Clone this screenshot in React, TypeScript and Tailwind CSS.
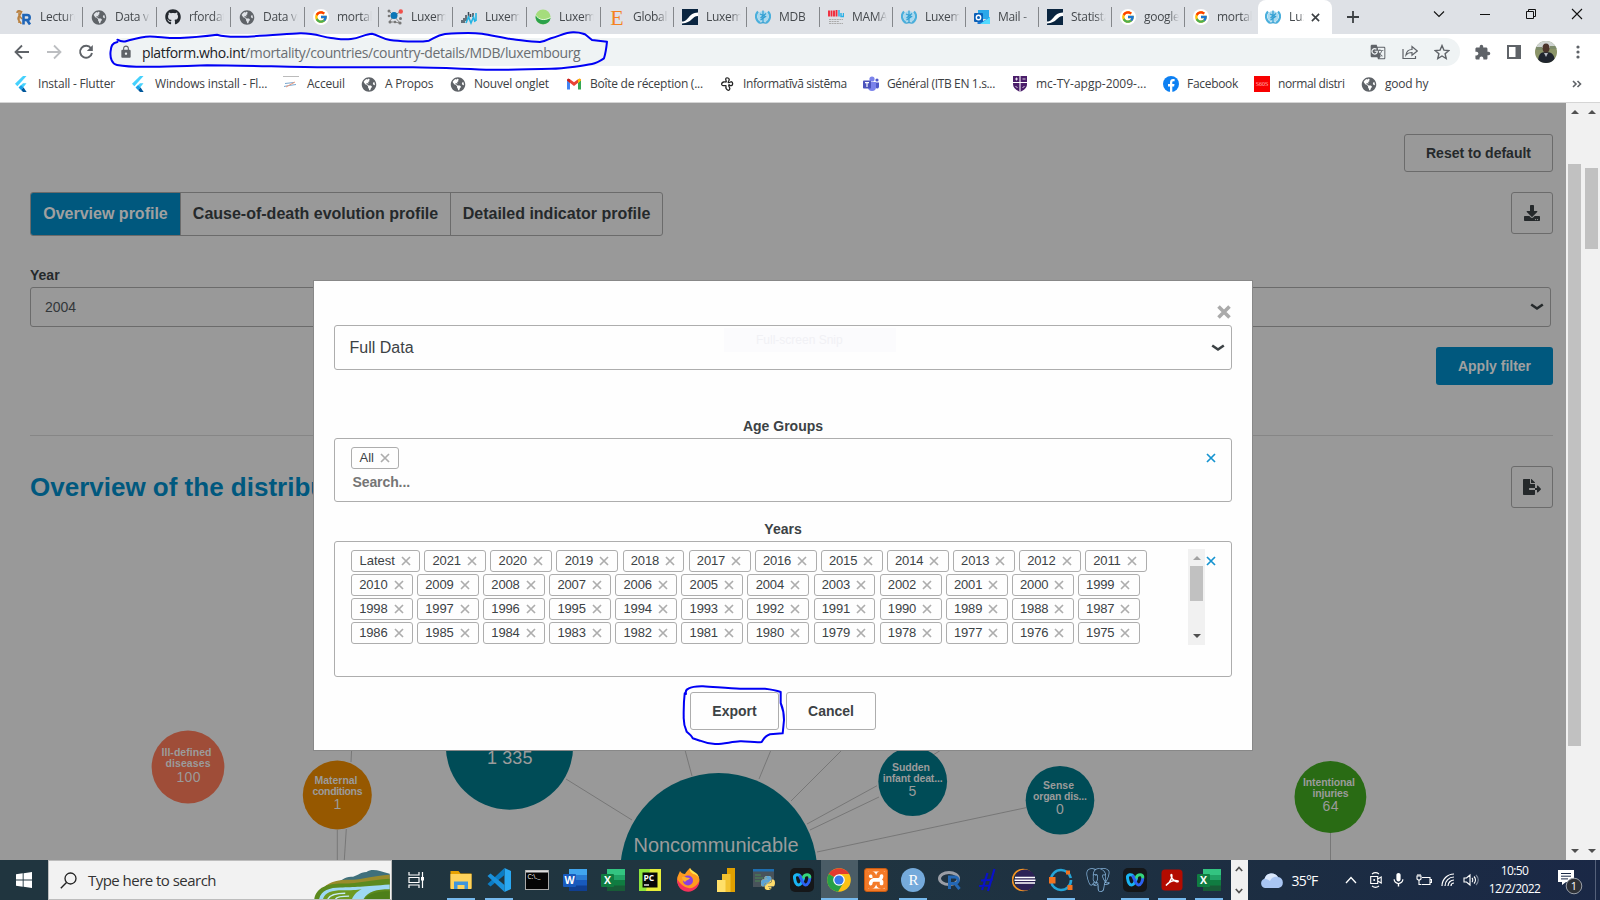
import React from "react";
import { FaDownload, FaFileExport, FaGithub, FaGlobeAmericas, FaPython } from "react-icons/fa";
import { FcGoogle } from "react-icons/fc";
import { SiPostgresql, SiXampp } from "react-icons/si";
import { MdLock, MdGTranslate, MdMic, MdExtension } from "react-icons/md";

type P = { children?: React.ReactNode };

const Svg16 = ({ children }: P) => (
  <svg viewBox="0 0 16 16" className="h-4 w-4 shrink-0">{children}</svg>
);
const Svg24 = ({ children }: P) => (
  <svg viewBox="0 0 24 24" className="h-6 w-6 shrink-0">{children}</svg>
);

const Globe = () => <FaGlobeAmericas className="h-[15px] w-4 shrink-0 text-[#5f6368]" />;
const Google = () => (
  <span className="flex h-4 w-4 shrink-0 items-center justify-center rounded-full bg-white">
    <FcGoogle className="h-[14px] w-[14px]" />
  </span>
);
const RProject = () => (
  <Svg16>
    <path d="M1 4c0-3 4-3 4-.5S1.500 7 2 10s3 2 3 5M3 1v13M6 2L3.500 7 6 10" stroke="#b9803f" strokeWidth="1.500" fill="none" />
    <path d="M7.500 15.500V6h3.700a2.300 2.300 0 0 1 0 5H8M11 11l3 4.500" stroke="#1f65b7" strokeWidth="2.600" fill="none" />
  </Svg16>
);
const Nodes = () => (
  <Svg16>
    <path d="M2 2l5 5 7-5M7 7l-5 6M7 7l6 7M2 13h5l6 1" stroke="#888" fill="none" />
    <circle cx="7" cy="6.500" r="3.500" fill="#0b76b8" />
    <circle cx="13.800" cy="2.500" r="2.200" fill="#f0504a" />
    <g fill="#777"><circle cx="2" cy="2" r="1.500" /><circle cx="2" cy="7" r="1.300" /><circle cx="3" cy="13" r="1.500" /><circle cx="8" cy="13" r="1.300" /><circle cx="13" cy="14" r="1.600" /><circle cx="13.500" cy="9.500" r="1.500" /></g>
  </Svg16>
);
const Bars = () => (
  <Svg16>
    <path d="M1 14v-3M3 14V9M5 12V6M7.500 9V3M9.500 8V5M12 8V4" stroke="#3b4a55" strokeWidth="1.500" />
    <path d="M5 14l2.500-6L10 14l2.500-6 1.500 5M15 12V4" stroke="#22b4e4" strokeWidth="1.600" fill="none" />
  </Svg16>
);
const Leaf = () => (
  <Svg16>
    <circle cx="8" cy="8" r="7.600" fill="#a5dd7c" />
    <path d="M.8 6C4 11 9 12 15.600 9A7.600 7.600 0 0 1 .6 9z" fill="#2ba14b" />
    <path d="M.6 6C4 11 9 12 15.500 8.500" stroke="#e4f7d6" fill="none" />
  </Svg16>
);
const Statista = () => (
  <Svg16>
    <rect width="16" height="16" fill="#0a2540" />
    <path d="M0 12.500C7 12.500 6 4 16 3.500V7C10 7 10 14 0 14.500z" fill="#fff" />
  </Svg16>
);
const Who = () => (
  <Svg16>
    <circle cx="8" cy="7.500" r="5.500" fill="#a9d9ef" />
    <path d="M3 2.500C-.4 6 .6 11.500 5 14M13 2.500c3.400 3.500 2.400 9-2 11.500" fill="none" stroke="#4aafdc" strokeWidth="2.200" />
    <path d="M5 14.200c2-.8 4-.8 6 0M8 1.500v11.500M5 5l5.500 2.500-5 3.500M11 4.500L5.500 9" stroke="#339fd2" strokeWidth="1.200" fill="none" />
  </Svg16>
);
const MiLu = () => (
  <Svg16>
    <path d="M1 1.500v6M3.500 1.500v6M6 1.500v6M8.500 1v6.500" stroke="#f02a3a" strokeWidth="1.900" />
    <path d="M11 1v6.500M13 4v3.500h2.500V4" stroke="#2cb1e6" strokeWidth="1.500" fill="none" />
    <path d="M1 10.500h14M1 12.500h10M1 14.500h14" stroke="#aaa" strokeWidth="1.200" strokeDasharray="2 .6" />
  </Svg16>
);
const Outlook = () => (
  <Svg16>
    <rect x="4" y="1" width="11" height="9" fill="#2aa8ea" />
    <path d="M3.500 8l6 4 6.500-4v7H3.500z" fill="#1976d2" /><path d="M16 8v7H6z" fill="#50d9ff" />
    <rect y="4" width="9" height="9" rx="1" fill="#0a60b8" />
    <circle cx="4.500" cy="8.500" r="2.200" fill="none" stroke="#fff" strokeWidth="1.400" />
  </Svg16>
);
const Flutter = () => (
  <Svg16>
    <path d="M9 0L1 7.800l2.400 2.400L12.500 0z" fill="#45d1fd" />
    <path d="M9 7.200l-4.400 4.300 2.500 2.500 5.400-6.800z" fill="#45d1fd" />
    <path d="M4.600 11.500L7 9.200l2.600 2.400-2.500 2.400z" fill="#1aa0e8" />
    <path d="M7.100 14l2.500-2.400 3 4.400H9z" fill="#01579b" />
  </Svg16>
);
const Accueil = () => (
  <Svg16>
    <path d="M0 .5h16" stroke="#bbb" /><path d="M1 10.500l5-1 7-1M2 7.500l9-1" stroke="#79a7cf" fill="none" /><path d="M3 11l9-5" stroke="#ef9a7a" />
  </Svg16>
);
const Gmail = () => (
  <Svg16>
    <path d="M1 4v9.500h3V7z" fill="#4285f4" /><path d="M15 4v9.500h-3V7z" fill="#34a853" />
    <path d="M1 4.500c0-2 2-2 3-1.200l4 3 4-3c1-.8 3-.8 3 1.200L8 10z" fill="#ea4335" />
    <path d="M12 3.300c1-.8 3-.8 3 1.200L12 7z" fill="#fbbc04" /><path d="M1 4.500C1 2.600 3 2.500 4 3.300V7z" fill="#c5221f" />
  </Svg16>
);
const Info = () => (
  <Svg16>
    <path d="M7 4.500C6 2 7.500 1.500 9 2s1.500 2 .5 3.500S10 7 11.500 6s2.500 1 2 2.500-2 1.500-3 .5-1 1 0 2.500-.5 3.500-2 2.500S6.500 12 7 10.500 5 10 3.500 9.500 2.500 6.500 4.500 6 8 7 7 4.500z" fill="none" stroke="#222" strokeWidth="1.300" />
  </Svg16>
);
const Teams = () => (
  <Svg16>
    <circle cx="9" cy="3" r="2.600" fill="#7b83eb" /><circle cx="14" cy="4" r="1.600" fill="#5059c9" />
    <path d="M5 6h8v5a4 4 0 0 1-8 0z" fill="#7b83eb" /><path d="M13 6.500h3V11a2 2 0 0 1-3 1z" fill="#5059c9" />
    <rect y="4.500" width="8" height="8" rx=".8" fill="#4b53bc" /><path d="M2 6.600h4M4 6.600v4.400" stroke="#fff" strokeWidth="1.200" />
  </Svg16>
);
const Shield = () => (
  <Svg16>
    <path d="M1 0h14v8c0 4-3 6-7 8-4-2-7-4-7-8z" fill="#4a1d6a" />
    <path d="M8 0v16M1 6.500h14" stroke="#fff" strokeWidth="1.100" /><path d="M3 3h3M4.500 1.500v3M10.500 3h3M3.500 10l2 2M12.500 10l-2 2" stroke="#fff" strokeWidth=".8" />
  </Svg16>
);
const Facebook = () => (
  <Svg16>
    <circle cx="8" cy="8" r="8" fill="#0d80f2" />
    <path d="M7 16v-5.500H5V8h2V6.300C7 4.200 8.200 3 10 3l1.600.1v2.100h-1c-1 0-1.300.6-1.300 1.200V8h2.200l-.4 2.500H9.300V16z" fill="#fff" />
  </Svg16>
);
const RedSquare = () => (
  <span className="flex h-4 w-4 shrink-0 items-center justify-center bg-[#f80000] font-['Liberation_Serif',serif] text-[6px] text-[#ffb0b0]">S60S</span>
);

const tabs: { w: string; t: string; I: () => React.JSX.Element }[] = [
  { w: "w-[75px]", t: "Lecture", I: RProject },
  { w: "w-[74px]", t: "Data vi", I: Globe },
  { w: "w-[74px]", t: "rfordata", I: () => <FaGithub className="h-4 w-4 shrink-0 text-[#24292f]" /> },
  { w: "w-[74px]", t: "Data vi", I: Globe },
  { w: "w-[74px]", t: "mortali", I: Google },
  { w: "w-[74px]", t: "Luxem", I: Nodes },
  { w: "w-[74px]", t: "Luxem", I: Bars },
  { w: "w-[74px]", t: "Luxem", I: Leaf },
  { w: "w-[73px]", t: "Global", I: () => <span className="flex h-4 w-4 shrink-0 items-center justify-center font-['Liberation_Serif',serif] text-[22px] text-[#f5821f]">E</span> },
  { w: "w-[73px]", t: "Luxem", I: Statista },
  { w: "w-[73px]", t: "MDB", I: Who },
  { w: "w-[73px]", t: "MAMA", I: MiLu },
  { w: "w-[73px]", t: "Luxem", I: Who },
  { w: "w-[73px]", t: "Mail -", I: Outlook },
  { w: "w-[73px]", t: "Statista", I: Statista },
  { w: "w-[73px]", t: "google", I: Google },
  { w: "w-[73px]", t: "mortali", I: Google },
];

const bookmarks: { w: string; t: string; s: string; I: () => React.JSX.Element }[] = [
  { w: "w-[117px]", t: "Install - Flutter", s: "tracking-[-0.2px]", I: Flutter },
  { w: "w-[152px]", t: "Windows install - Fl...", s: "tracking-[-0.17px]", I: Flutter },
  { w: "w-[78px]", t: "Acceuil", s: "tracking-[-0.22px]", I: Accueil },
  { w: "w-[89px]", t: "A Propos", s: "tracking-[-0.27px]", I: Globe },
  { w: "w-[116px]", t: "Nouvel onglet", s: "tracking-[-0.22px]", I: Globe },
  { w: "w-[153px]", t: "Boîte de réception (...", s: "tracking-[-0.26px]", I: Gmail },
  { w: "w-[144px]", t: "Informatīvā sistēma", s: "tracking-[-0.38px]", I: Info },
  { w: "w-[149px]", t: "Général (ITB EN 1.s...", s: "tracking-[-0.35px]", I: Teams },
  { w: "w-[151px]", t: "mc-TY-apgp-2009-...", s: "tracking-[0px]", I: Shield },
  { w: "w-[91px]", t: "Facebook", s: "tracking-[-0.3px]", I: Facebook },
  { w: "w-[107px]", t: "normal distri", s: "tracking-[-0.4px]", I: RedSquare },
  { w: "w-[80px]", t: "good hy", s: "tracking-[-0.22px]", I: Globe },
];

function TabStrip() {
  return (
    <div className="flex h-[34px] bg-[#dee1e6] pl-[8px] text-[12px] text-[#45494d]">
      {tabs.map((t, i) => (
        <div key={i} className={`${t.w} flex h-full shrink-0 items-center`}>
          <div className="flex h-full min-w-0 flex-1 items-center gap-2 pl-2">
            <t.I />
            <span className="w-[35px] overflow-hidden whitespace-nowrap tracking-[-0.3px] [mask-image:linear-gradient(to_right,black_70%,transparent)]">{t.t}</span>
          </div>
          <div className={i === 16 ? "w-px" : "h-5 w-px bg-[#84878b]"} />
        </div>
      ))}
      <div className="flex h-full w-[74px] shrink-0 items-center rounded-t-lg bg-white pl-[7px]">
        <Who />
        <span className="ml-2 w-[15px] overflow-hidden whitespace-nowrap [mask-image:linear-gradient(to_right,black_70%,transparent)]">Lux</span>
        <svg viewBox="0 0 10 10" className="ml-[7px] h-[9px] w-[9px]"><path d="M1 1l8 8M9 1L1 9" stroke="#3c4043" strokeWidth="1.800" /></svg>
      </div>
      <svg viewBox="0 0 12 12" className="mt-[11px] ml-[15px] h-3 w-3"><path d="M6 0v12M0 6h12" stroke="#3c4043" strokeWidth="1.800" /></svg>
      <div className="mt-[8px] ml-[74px] flex h-3 gap-[34px]">
        <svg viewBox="0 0 12 12" className="h-3 w-3"><path d="M1 3.500l5 5 5-5" stroke="#111" strokeWidth="1.100" fill="none" /></svg>
        <svg viewBox="0 0 12 12" className="h-3 w-3"><path d="M1 6.500h10" stroke="#111" /></svg>
        <svg viewBox="0 0 12 12" className="h-3 w-3"><path d="M1.500 3.500h7v7h-7zM3.500 3.500v-2h7v7h-2" stroke="#111" fill="none" /></svg>
        <svg viewBox="0 0 12 12" className="h-3 w-3"><path d="M1 1l10 10M11 1L1 11" stroke="#111" strokeWidth="1.100" /></svg>
      </div>
    </div>
  );
}

function Toolbar() {
  return (
    <div className="flex h-[36px] items-center pl-[14px]">
      <Svg16><path d="M15 8H2M8 1.500L1.500 8 8 14.500" stroke="#5f6368" strokeWidth="1.800" fill="none" /></Svg16>
      <span className="w-4" />
      <Svg16><path d="M1 8h13M8 1.500L14.500 8 8 14.500" stroke="#bcbec1" strokeWidth="1.800" fill="none" /></Svg16>
      <span className="w-4" />
      <Svg16><path d="M13 4.200A6 6 0 1 0 14 9" stroke="#5f6368" strokeWidth="1.900" fill="none" /><path d="M14.800 1v6h-6z" fill="#5f6368" /></Svg16>
      <div className="ml-[16px] flex h-7 w-[1350px] items-center rounded-full bg-[#eff3f4]">
        <MdLock className="ml-[9px] h-[14px] w-[14px] text-[#5f6368]" />
        <span className="ml-[9px] text-[14px] tracking-[-0.37px] whitespace-nowrap text-[#6a6e72]"><span className="text-[#202124]">platform.who.int</span>/mortality/countries/country-details/MDB/luxembourg</span>
        <div className="mr-[10px] ml-auto flex gap-4">
          <MdGTranslate className="h-4 w-4 text-[#5f6368]" />
          <Svg16><path d="M1 5v9.500h12.500V12" stroke="#5f6368" strokeWidth="1.200" fill="none" /><path d="M4 11c.5-4 3-5.500 6-5.500V2.500L15.300 7 10 11.200V8.500C7 8.500 5.500 9 4 11z" stroke="#5f6368" strokeWidth="1.200" fill="none" /></Svg16>
          <Svg16><path d="M8 1.600l1.900 4.500 4.900.4-3.700 3.200 1.100 4.800L8 12l-4.200 2.500 1.100-4.800L1.200 6.500l4.900-.4z" stroke="#5f6368" strokeWidth="1.400" fill="none" /></Svg16>
        </div>
      </div>
      <MdExtension className="ml-[14px] h-[17px] w-[17px] text-[#5f6368]" />
      <svg viewBox="0 0 14 14" className="ml-[16px] h-[14px] w-[14px]"><path d="M1 1h12v12H1z" stroke="#5f6368" strokeWidth="2" fill="none" /><path d="M8.500 0H14v14H8.500z" fill="#5f6368" /></svg>
      <svg viewBox="0 0 22 22" className="ml-[14px] h-[22px] w-[22px] overflow-hidden rounded-full">
        <path d="M0 0h22v22H0z" fill="#8b9468" /><path d="M0 0h22v7H0z" fill="#cfd4d2" /><path d="M1 6h6v3H1zM15 5h7v3h-7z" fill="#7d8b6a" />
        <path d="M3 22c0-8 2-11 8-11s9 3 9 11z" fill="#20252e" /><ellipse cx="11" cy="7" rx="3.500" ry="4.500" fill="#4b342b" /><path d="M9 12l2 4 2-4z" fill="#b8bcc4" />
      </svg>
      <svg viewBox="0 0 4 14" className="ml-[19px] h-[14px] w-1"><g fill="#5f6368"><circle cx="2" cy="2" r="1.600" /><circle cx="2" cy="7" r="1.600" /><circle cx="2" cy="12" r="1.600" /></g></svg>
    </div>
  );
}

function Bookmarks() {
  return (
    <div className="flex h-[28px] items-center pl-[14px] text-[12px] text-[#3c4043]">
      {bookmarks.map((b, i) => (
        <div key={i} className={`${b.w} flex shrink-0 items-center gap-2`}>
          <b.I />
          <span className={`${b.s} whitespace-nowrap`}>{b.t}</span>
        </div>
      ))}
      <svg viewBox="0 0 10 8" className="ml-[131px] h-2 w-[10px]"><path d="M1 1l3 3-3 3M5.500 1l3 3-3 3" stroke="#5f6368" strokeWidth="1.600" fill="none" /></svg>
    </div>
  );
}

const Chevron = () => (
  <svg viewBox="0 0 14 8" className="h-2 w-[14px]"><path d="M1.200 1.500L7 5.500l5.800-4" stroke="currentColor" strokeWidth="2.600" fill="none" /></svg>
);
const Cross = () => (
  <svg viewBox="0 0 10 10" className="h-[10px] w-[10px] shrink-0"><path d="M1 1l8 8M9 1L1 9" stroke="currentColor" strokeWidth="1.700" /></svg>
);

type T = [string, number, number, number, number, boolean];
const labels: T[] = [
  ["Ill-defined", 186.5, 756, 50, 10.5, true],
  ["diseases", 188, 767, 45, 10.5, true],
  ["100", 188.500, 782, 24, 14, false],
  ["Maternal", 336, 784, 43, 10.5, true],
  ["conditions", 337.500, 795, 50, 10.5, true],
  ["1", 337.500, 809, 7, 14, false],
  ["1 335", 509.700, 764, 45.500, 18, false],
  ["Noncommunicable", 716, 852, 165, 20, false],
  ["diseases", 716, 875, 76, 20, false],
  ["Sudden", 911, 771, 38, 10.5, true],
  ["infant deat...", 912.700, 782, 60, 10.5, true],
  ["5", 912.500, 796, 8, 14, false],
  ["Sense", 1058.500, 789, 31, 10.5, true],
  ["organ dis...", 1060, 800, 54, 10.5, true],
  ["0", 1060, 814, 8, 14, false],
  ["Intentional", 1329, 786, 52, 10.5, true],
  ["injuries", 1330.500, 797, 36, 10.5, true],
  ["64", 1330.500, 811, 16, 14, false],
];

function Bubbles() {
  return (
    <svg viewBox="0 720 1566 140" className="h-[140px] w-[1566px] overflow-hidden">
      <path d="M566 779l66 41M685 750l7 26M771 750l-12 29M842 750l-51 51M877 785.700L807 824M879 797l-69 33M941 750l-8 5M1026 807.700L817 852M351.600 750l-.6 12M337.300 830v30M346.300 829l-2 31M1330.500 833v27" stroke="#777" strokeWidth="1" fill="none" />
      <circle cx="188" cy="767" r="36.400" fill="#9f4d38" />
      <circle cx="337.300" cy="795" r="34.500" fill="#965800" />
      <g fill="#004c57">
        <circle cx="509.500" cy="746" r="63.700" /><circle cx="718.700" cy="871.400" r="98.400" />
        <circle cx="912.700" cy="781.600" r="34.400" /><circle cx="1060" cy="800.300" r="34.300" />
      </g>
      <circle cx="1330.400" cy="797" r="35.900" fill="#296b14" />
      {labels.map(([s, x, y, w, f, b], i) => (
        <text key={i} x={x} y={y} textAnchor="middle" textLength={w} fontSize={f} fontWeight={b ? 700 : 400} fill="#9b9b9b">{s}</text>
      ))}
    </svg>
  );
}

function Page() {
  return (
    <div className="flex h-[757px] w-[1566px] flex-col bg-[#999] font-['Liberation_Sans',Arial,sans-serif] text-[#25292b]">
      <div className="flex h-[89px] justify-end pt-[31px] pr-[13px]">
        <div className="flex h-[38px] w-[149px] items-center justify-center rounded-[3px] border border-[#6b6b6b] text-[14px] font-bold">Reset to default</div>
      </div>
      <div className="flex h-[72px] items-start justify-between pr-[13px] pl-[30px]">
        <div className="flex h-[44px] overflow-hidden rounded-[3px] border border-[#6b6b6b] text-[16px] font-bold whitespace-nowrap">
          <div className="flex w-[150px] items-center justify-center border-r border-[#6b6b6b] bg-[#00587e] text-[#a0a0a0]">Overview profile</div>
          <div className="flex w-[270px] items-center justify-center border-r border-[#6b6b6b]">Cause-of-death evolution profile</div>
          <div className="flex w-[211px] items-center justify-center">Detailed indicator profile</div>
        </div>
        <div className="flex h-[42px] w-[42px] items-center justify-center rounded-[3px] border border-[#6b6b6b]"><FaDownload className="h-4 w-4" /></div>
      </div>
      <div className="h-[23px] pl-[30px] text-[14px] leading-[22px] font-bold">Year</div>
      <div className="mr-[15px] ml-[30px] flex h-10 items-center justify-between rounded-[3px] border border-[#6b6b6b] pr-[6px] pl-[14px] text-[14px]">
        <span className="text-[#33373a]">2004</span>
        <Chevron />
      </div>
      <div className="mt-5 flex justify-end pr-[13px]">
        <div className="flex h-[38px] w-[117px] items-center justify-center rounded-[3px] bg-[#00587e] text-[14px] font-bold text-[#a0a0a0]">Apply filter</div>
      </div>
      <div className="mt-[50px] mr-[13px] ml-[30px] h-px shrink-0 bg-[#868686]" />
      <div className="mt-[30px] flex h-[42px] shrink-0 items-center justify-between pr-[13px] pl-[30px]">
        <h2 className="w-[283px] overflow-hidden text-[26px] font-bold whitespace-nowrap text-[#00587e]">Overview of the distribu</h2>
        <div className="flex h-[42px] w-[42px] items-center justify-center rounded-[3px] border border-[#6b6b6b]"><FaFileExport className="h-4 w-[18px]" /></div>
      </div>
      <div className="mt-auto h-[140px]"><Bubbles /></div>
    </div>
  );
}

const Up = () => <svg viewBox="0 0 8 4" className="mx-auto h-1 w-2"><path d="M0 4l4-4 4 4z" fill="currentColor" /></svg>;
const Down = () => <svg viewBox="0 0 8 4" className="mx-auto h-1 w-2"><path d="M0 0l4 4 4-4z" fill="currentColor" /></svg>;

function Chip({ t }: { t: string }) {
  const year = t.length === 4;
  return (
    <span className={`flex h-[22px] shrink-0 items-center gap-[6px] rounded-[3px] border border-[#adadad] text-[13px] text-[#3c4245] ${year ? "w-[61.900px] pl-[7.200px] tracking-[-0.15px]" : "pr-[8.200px] pl-[7.500px]"}`}>
      {t}<span className="text-[#adadad]"><Cross /></span>
    </span>
  );
}

const yearRows = [
  ["Latest", ...Array.from({ length: 11 }, (_, i) => String(2021 - i))],
  ...[2010, 1998, 1986].map((s) => Array.from({ length: 12 }, (_, i) => String(s - i))),
];

function Modal() {
  return (
    <div className="absolute top-[280px] left-[313px] flex h-[471px] w-[940px] flex-col border border-[#888] bg-[#fefefe] px-5 font-['Liberation_Sans',Arial,sans-serif] text-[#3c4245]">
      <div className="flex h-[44px] justify-end pt-[24px] pr-[1px]">
        <svg viewBox="0 0 14 14" className="h-[14px] w-[14px]"><path d="M1.500 1.500l11 11M12.500 1.500l-11 11" stroke="#aaa" strokeWidth="3.600" /></svg>
      </div>
      <div className="flex h-[45px] items-center justify-between rounded-[3px] border border-[#adadad] pr-[6px] pl-[14.500px] text-[16px]">
        <span>Full Data</span><Chevron />
      </div>
      <div className="mt-[46px] h-[22px] text-center text-[14px] leading-[20px] font-bold">Age Groups</div>
      <div className="flex h-[64px] justify-between rounded-[3px] border border-[#adadad] pt-2 pr-[15px] pl-4">
        <div>
          <div className="flex"><Chip t="All" /></div>
          <div className="pt-[4px] pl-[1.500px] text-[14px] leading-[18px] font-bold tracking-[-0.1px] text-[#757575]">Search...</div>
        </div>
        <div className="pt-[6px] text-[#1593d0]"><Cross /></div>
      </div>
      <div className="mt-[17px] h-[22px] text-center text-[14px] leading-[20px] font-bold">Years</div>
      <div className="flex h-[136px] rounded-[3px] border border-[#adadad] pt-[7px] pl-4">
        <div className="flex w-[837px] flex-col gap-[2px] pt-px">
          {yearRows.map((r, i) => (
            <div key={i} className="flex gap-[4.200px]">{r.map((y) => <Chip key={y} t={y} />)}</div>
          ))}
        </div>
        <div className="flex h-[96px] w-[17px] flex-col bg-[#f1f1f1] pt-[7px] text-[#a3a3a3]">
          <Up />
          <div className="mx-auto mt-[6px] h-[35px] w-[13px] bg-[#c1c1c1]" />
          <div className="mt-auto pb-[7px] text-[#505050]"><Down /></div>
        </div>
        <div className="pt-[7px] pl-px text-[#1593d0]"><Cross /></div>
      </div>
      <div className="mt-[15px] flex justify-center gap-[7px] text-[14px] font-bold">
        <div className="flex h-[38px] w-[89px] items-center justify-center rounded-[3px] border border-[#adadad]">Export</div>
        <div className="flex h-[38px] w-[90px] items-center justify-center rounded-[3px] border border-[#adadad]">Cancel</div>
      </div>
      <div className="absolute top-[47px] left-[410px] flex h-6 w-[172px] items-center bg-[#f8f8fb]/50 pl-[32px] text-[12px] text-[#f1f1f5]">Full-screen Snip</div>
    </div>
  );
}

const Office = ({ l, a, b, c, d }: { l: string; a: string; b: string; c: string; d: string }) => (
  <Svg24>
    <path d="M6 1h18v6H6z" fill={a} /><path d="M6 7h18v5.500H6z" fill={b} /><path d="M6 12h18v6H6z" fill={c} /><path d="M6 17.500h18V23H6z" fill={d} />
    <rect y="6" width="13" height="13" rx="1" fill={c} />
    <text x="6.500" y="16.300" textAnchor="middle" fontSize="10.500" fontWeight="700" fill="#fff">{l}</text>
  </Svg24>
);
const Excel = () => <Office l="X" a="#33c481" b="#21a366" c="#107c41" d="#185c37" />;
const Webex = () => (
  <Svg24>
    <rect width="24" height="24" rx="5" fill="#151719" />
    <path d="M10.500 8.500c-2-3-6.500-2-6 1.500.4 3 1.500 7 4 7 3 0 3.500-3 5-6.500" stroke="#19b4f2" strokeWidth="3" fill="none" strokeLinecap="round" />
    <path d="M10 8.500c1.500 2 2.500 8.500 5.500 8.500 2.500 0 4-4 4.300-7" stroke="#2c62f0" strokeWidth="3" fill="none" strokeLinecap="round" />
    <path d="M13.500 9c1.500-3 6-3 6.300 0" stroke="#35d67c" strokeWidth="3" fill="none" strokeLinecap="round" />
  </Svg24>
);

const apps: { on?: boolean; active?: boolean; n: React.ReactNode }[] = [
  { on: true, n: <Svg24><path d="M1.500 3h8l2 2.500h11V20h-21z" fill="#e8a200" /><path d="M1.500 6h21v15h-21z" fill="#ffd35c" /><path d="M5 13.500h14V21h-3.500v-4h-7v4H5z" fill="#3f95dc" /></Svg24> },
  { on: true, n: <Svg24><path d="M17.500 0L24 3v18l-6.500 3z" fill="#2aa8f2" /><path d="M17.500 0v7L3.500 18.500.5 16z" fill="#0b7cc4" /><path d="M17.500 24v-7L3.500 5.500.5 8z" fill="#1a91dc" /></Svg24> },
  { n: <Svg24><rect x=".5" y="2.500" width="23" height="19" fill="#050505" stroke="#aaa" /><path d="M1 3.500h22" stroke="#ddd" strokeWidth="2" /><text x="2.500" y="11" fontSize="6.500" fill="#fff">C:\._</text></Svg24> },
  { n: <Office l="W" a="#41a5ee" b="#2b7cd3" c="#185abd" d="#103f91" /> },
  { n: <Excel /> },
  { n: <Svg24><rect x="1" y="1" width="22" height="22" fill="#8ee53b" /><path d="M12 1h11v22H8z" fill="#e8ee3a" /><rect x="4.500" y="4.500" width="15" height="15" fill="#080808" /><text x="5.500" y="13" fontSize="8.500" fontWeight="700" fill="#fff">PC</text><path d="M6 17h5" stroke="#fff" strokeWidth="1.300" /></Svg24> },
  { n: <Svg24><path d="M1 12C1 8 3 6 4 3c1 2 3 3 5 3 1-2 3-4 5-6 1 3 3 3 5 6 2-1 4 2 4.500 6A11.300 11.300 0 0 1 1 13z" fill="#ff9a1f" /><path d="M1 11c0 9 6 13 11.500 12.800C18 23.500 23 19 23.500 13c-3 5-7 8-11 7-5-1-8-4-11.500-9z" fill="#f5325b" /><path d="M14 0c1 3 8 4 9 10-2-3-4-4-6-4-2-2-4-3-3-6z" fill="#ffe14a" /><circle cx="12" cy="12.500" r="5" fill="#8a3fe0" /><path d="M6 9c3-1 5 1 8 1-1 2-4 2-5 4-2-1-3-3-3-5z" fill="#ffb02e" /></Svg24> },
  { n: <Svg24><path d="M13 0h8v24h-8z" fill="#e0a000" /><path d="M8 6h8.500v18H8z" fill="#f2c230" /><path d="M3 12h8.500v12H3z" fill="#ffe06a" /></Svg24> },
  { n: <span className="relative flex h-6 w-6"><Svg24><path d="M1 1h21v18H1z" fill="#48535b" /><path d="M1 1h21v2.500H1z" fill="#1e6eb0" /><path d="M3 7h6M3 10h8M3 13h5" stroke="#4d8a55" /></Svg24><FaPython className="absolute top-[7px] left-[8px] h-4 w-4 text-[#ffdc6b]" /><FaPython className="absolute top-[7px] left-[8px] h-4 w-4 text-[#5ba4d8] [clip-path:polygon(0_0,100%_0,0_100%)]" /></span> },
  { n: <Webex /> },
  { on: true, active: true, n: <Svg24><circle cx="12" cy="12" r="11.800" fill="#fbc116" /><path d="M12 12L1.800 6A11.800 11.800 0 0 1 22.200 6H12z" fill="#e33b2e" /><path d="M12 12L1.800 6A11.800 11.800 0 0 0 11 23.800L17 14z" fill="#26a047" /><circle cx="12" cy="12" r="5.800" fill="#fff" /><circle cx="12" cy="12" r="4.600" fill="#3579ea" /></Svg24> },
  { n: <span className="flex h-6 w-6 items-center justify-center rounded-[3px] border border-[#c85a10] bg-[#f47a28]"><SiXampp className="h-[30px] w-[30px] shrink-0 text-white [clip-path:inset(22%)]" /></span> },
  { on: true, n: <span className="flex h-6 w-6 items-center justify-center rounded-full bg-[#75aadb] font-['Liberation_Serif',serif] text-[15px] text-white">R</span> },
  { n: <Svg24><ellipse cx="11" cy="10.500" rx="9.500" ry="6" fill="none" stroke="#9a9ea6" strokeWidth="3" /><path d="M11.500 21V9h5.500a3 3 0 0 1 0 6.500h-5M17 15.500l4.500 5.500" stroke="#2468b5" strokeWidth="3" fill="none" /></Svg24> },
  { n: <Svg24><path d="M12.500 5L7 22M19.500 1L13 23M6 12.500l12-1M4 18l11-.5" stroke="#0a12c8" strokeWidth="2.200" /></Svg24> },
  { n: <Svg24><circle cx="11" cy="12" r="10.500" fill="none" stroke="#f39324" strokeWidth="1.600" /><circle cx="13" cy="12" r="10.500" fill="#2c2255" /><path d="M3 9.500h20M2.500 12.300h21M3 15h20" stroke="#fff" strokeWidth="1.500" /></Svg24> },
  { on: true, n: <Svg24><circle cx="12" cy="12" r="10" fill="none" stroke="#25a5d8" strokeWidth="2.600" strokeDasharray="29 2.400" /><g fill="#f27321"><rect x="0" y="9" width="6.500" height="6.500" /><rect x="17" y="2.500" width="4" height="4" /><rect x="18.500" y="17" width="5" height="5" /></g></Svg24> },
  { n: <SiPostgresql className="h-6 w-6 text-[#86b4dc]" /> },
  { on: true, n: <Webex /> },
  { on: true, n: <Svg24><rect x="1.500" y="1.500" width="21" height="21" rx="3.500" fill="#b30b00" /><path d="M6 17.500c2-3 7-6 12-4.500 1 1.500-3 .8-5-1.500s-2.500-5-1.500-5 .5 7-5.500 11z" stroke="#fff" strokeWidth="1.500" fill="none" /></Svg24> },
  { on: true, n: <Excel /> },
];

function Taskbar() {
  return (
    <div className="flex h-10 items-stretch bg-[linear-gradient(to_right,#20353f,#203540_50%,#1c2d42_80%,#1a2846)] text-white">
      <div className="flex w-12 items-center justify-center">
        <Svg16><path d="M0 2.300L6.700 1.300v6.300H0zM7.600 1.200L16 0v7.600H7.600zM0 8.500h6.700v6.300L0 13.800zM7.600 8.500H16V16l-8.400-1.200z" fill="#fff" /></Svg16>
      </div>
      <div className="flex w-[344px] items-center border border-[#bdbdbd] bg-[#f2f2f2]">
        <svg viewBox="0 0 17 17" className="ml-[11px] h-[17px] w-[17px]"><circle cx="10.500" cy="6.500" r="5.500" fill="none" stroke="#222" strokeWidth="1.300" /><path d="M6.500 10.500L.8 16.300" stroke="#222" strokeWidth="1.400" /></svg>
        <span className="ml-[11px] text-[15px] tracking-[-0.53px] whitespace-nowrap text-[#333]">Type here to search</span>
        <svg viewBox="0 0 78 30" className="mt-auto ml-auto h-[29px] w-[78px]">
          <path d="M22 13c6-1 9-6 16-6 6 0 9-5 16-5 6-4 14-1 24 2v20H22z" fill="#40707c" />
          <path d="M12 16c8-6 18-6 28-6s20-4 38-5v25H4z" fill="#9a8b2c" />
          <path d="M0 30c2-12 14-16 28-16 20 0 30-4 50-5v21z" fill="#5c8a1e" />
          <path d="M5 30c2-9 11-12 22-12 14 0 24-1 51-3v5c-14 0-22 2-27 10z" fill="#9ed8f4" />
          <path d="M9 30c2-7 10-9 20-9 9 0 15 0 20-1-6 3-8 6-10 10z" fill="#6f9a22" />
          <path d="M14 30c2-4 8-6 18-6M22 30c1-2 5-3 14-3" stroke="#c9ecf8" strokeWidth="1.500" fill="none" />
          <path d="M52 30c5-6 14-8 26-8v8z" fill="#4d7f1a" />
        </svg>
      </div>
      <div className="flex w-[50px] items-center pl-[16px]">
        <Svg16><path d="M1 0v3h10V0M1 16v-3h10v3M1 5.500h10v5H1zM14.500 0v16" stroke="#fff" strokeWidth="1.200" fill="none" /><path d="M13 5h3v3.500h-3z" fill="#fff" /></Svg16>
      </div>
      <div className="flex w-[788.500px] shrink-0">
        {apps.map((a, i) => (
          <div key={i} className={`flex shrink-0 flex-col items-center pt-2 ${a.active ? "bg-[#4a5c66]" : ""} ${i < 10 ? "w-[37.900px]" : "w-[37px]"}`}>
            {a.n}
            {a.on && <div className={`mt-auto h-[2px] bg-[#76b9ed] ${a.active ? "w-full" : "w-[28px]"}`} />}
          </div>
        ))}
      </div>
      <div className="flex w-[17px] flex-col items-center justify-between bg-[#f1f1f1] py-[6px]">
        <svg viewBox="0 0 8 6" className="h-[6px] w-2"><path d="M.8 5L4 1.500 7.200 5" stroke="#505050" strokeWidth="1.700" fill="none" /></svg>
        <svg viewBox="0 0 8 6" className="h-[6px] w-2"><path d="M.8 1L4 4.500 7.200 1" stroke="#505050" strokeWidth="1.700" fill="none" /></svg>
      </div>
      <div className="flex items-center pl-[12px]">
        <Svg24><path d="M5 20a4.800 4.800 0 0 1-.5-9.300A7.500 7.500 0 0 1 18 9a5.600 5.600 0 0 1 .5 11z" fill="#a9c6f3" /><path d="M4.500 10.700A7.500 7.500 0 0 1 18 9c-5-1-7 2-8 4-2-2-4-2-5.500-2.300z" fill="#dbe8fb" /></Svg24>
        <span className="ml-[8px] w-[28px] text-[14px] tracking-[-0.8px]">35°F</span>
        <svg viewBox="0 0 12 8" className="ml-[25px] h-2 w-3"><path d="M1 7l5-5.500L11 7" stroke="#fff" strokeWidth="1.300" fill="none" /></svg>
        <svg viewBox="0 0 12 16" className="ml-[13px] h-4 w-3"><path d="M.7 4.500h7v7h-7zM7.700 7l3.500-2v6L7.700 9M2 2c2-1.500 5-1.500 7 0M2 14c2 1.500 5 1.500 7 0" stroke="#fff" strokeWidth="1.100" fill="none" /><circle cx="4.200" cy="8" r="1" fill="#fff" /></svg>
        <MdMic className="ml-[8px] h-5 w-[17px]" />
        <svg viewBox="0 0 16 12" className="ml-[9px] h-3 w-4"><path d="M6 3.500h8v7H5.500M14 5.500h1.500v3H14M1 2h4v3L3 6.500 1 5zM2 0v2M4 0v2M3 6.500v4h2" stroke="#fff" strokeWidth="1.100" fill="none" /></svg>
        <svg viewBox="0 0 14 14" className="ml-[9px] h-[14px] w-[14px]"><path d="M1 13A12 12 0 0 1 13 1M4 13a9 9 0 0 1 9-9M7 13a6 6 0 0 1 6-6M10 13a3 3 0 0 1 3-3" stroke="#fff" strokeWidth="1.200" fill="none" /></svg>
        <svg viewBox="0 0 16 14" className="ml-[8px] h-[14px] w-4"><path d="M1 5h2.500L7 2v10L3.500 9H1zM9 5c1 1 1 3 0 4M11 3.500c2 2 2 5 0 7" stroke="#fff" strokeWidth="1.100" fill="none" /><path d="M13 2c3 3 3 7 0 10" stroke="#7c8798" strokeWidth="1.100" fill="none" /></svg>
        <div className="ml-[7px] w-[58px] text-center text-[12px] leading-[18px] tracking-[-0.6px] whitespace-nowrap"><div>10:50</div><div>12/2/2022</div></div>
        <svg viewBox="0 0 25 26" className="ml-[14px] mt-1 h-[26px] w-[25px]"><path d="M0 1h16v12H8l-4 3v-3H0z" fill="#fff" /><path d="M3 4.500h10M3 7.200h10M3 9.900h7" stroke="#1b2a47" /><circle cx="16" cy="17" r="7.800" fill="#2d3036" stroke="#9a9fa8" /><text x="16" y="21" textAnchor="middle" fontSize="11" fill="#fff">1</text></svg>
      </div>
      <div className="mr-[4px] ml-auto w-px bg-[#55617a]" />
    </div>
  );
}

export default function App() {
  return (
    <div className="relative h-[900px] w-[1600px] overflow-hidden bg-white font-['Open_Sans','Noto_Sans',sans-serif]">
      <TabStrip />
      <Toolbar />
      <Bookmarks />
      <div className="h-[5px] border-b border-[#d5d5d5] bg-white" />
      <div className="flex h-[757px]">
        <Page />
        <div className="flex w-[17px] flex-col bg-[#f1f1f1] pt-[7px] text-[#505050]">
          <Up />
          <div className="mx-auto mt-[50px] h-[582px] w-[13px] bg-[#c1c1c1]" />
          <div className="mt-auto pb-[7px]"><Down /></div>
        </div>
        <div className="flex w-[17px] flex-col bg-[#f1f1f1] pt-[7px] text-[#505050]">
          <Up />
          <div className="mx-auto mt-[54px] h-[81px] w-[13px] bg-[#c1c1c1]" />
          <div className="mt-auto pb-[7px]"><Down /></div>
        </div>
      </div>
      <Taskbar />
      <Modal />
      <svg viewBox="0 0 1600 900" className="pointer-events-none absolute inset-0 h-[900px] w-[1600px]">
        <g fill="none" stroke="#0000f5" strokeWidth="2" strokeLinejoin="round" strokeLinecap="round">
          <path d="M117.400 39.700Q121 42 125 41.500C134 39 141 36.500 150 36.500S168 38.500 180 38 207 36 217 34.700C225 37 232 37 241 36.700 260 36.500 285 34 300 33.300 315 33 322 37 331 38S342 40 351 39 365 34 372 33.700C378 35 383 39 390 40S418 42.500 429 40.700C436 37 438 35 445 34 460 33 475 33 482 33.700 495 36 505 38.500 513 39.300S530 42 540 42C547 41 548 39 551 38.300 560 36 565 32.500 573 32.300S583 34 585 34.300L592 40 607 41.700Q606 52 604 58.300C600 61 597 63 592 64S565 68.500 551 68.700C530 69 510 70 492 69.700 465 69 440 67.500 413 67.300S355 67.500 327 67.300C290 67 240 65.300 207 65.300 190 66 170 67 155 66.700 143 67 125 66.500 117 65 112 64 110 58 110.500 52S112 43 117.500 42" />
          <path d="M686 694Q685 690 688.300 688.700C693 686 698 686.300 703 686.300 715 687 730 688.500 740 688.700S757 688.500 765 688.700C772 689.500 778 691 780.700 692L780.700 703Q784 711 784 720L782.700 733.300 770 734.300Q765 736 761.700 742C755 743 748 741 740 741.300S722 744.500 715 744 703 742 700 740.700L692.700 738.300Q692 736 686.700 731.700C684 726 683.500 722 683.700 716.700Q683.500 703 684.700 693.300" />
        </g>
      </svg>
    </div>
  );
}
